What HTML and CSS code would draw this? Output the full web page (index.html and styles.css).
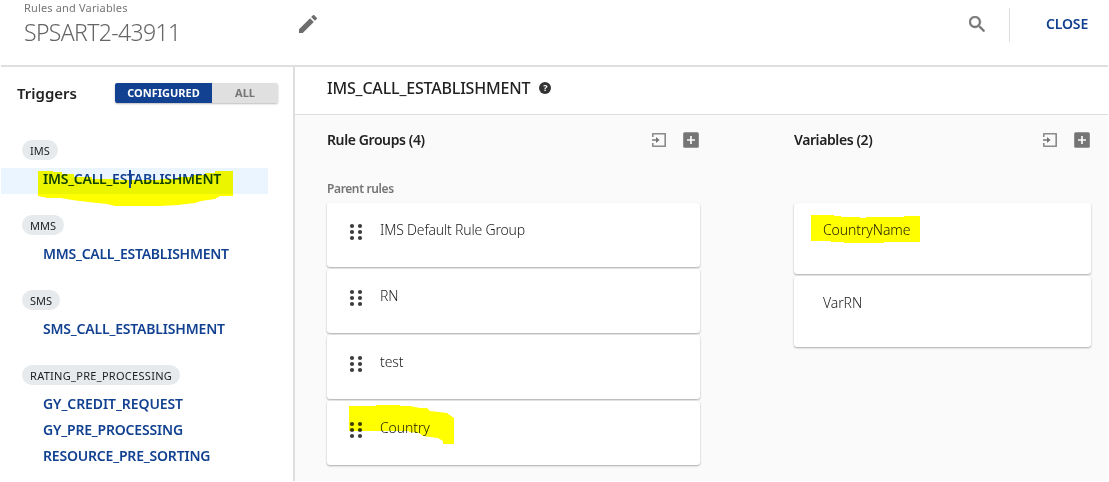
FILE: index.html
```html
<!DOCTYPE html>
<html lang="en">
<head>
<meta charset="utf-8">
<title>Rules and Variables</title>
<link rel="stylesheet" href="styles.css">
</head>
<body>
<svg class="symbols" aria-hidden="true">
  <symbol id="drag" viewBox="0 0 14 18"><g fill="#3d3d3d"><circle cx="3" cy="3" r="2.1"/><circle cx="11" cy="3" r="2.1"/><circle cx="3" cy="9" r="2.1"/><circle cx="11" cy="9" r="2.1"/><circle cx="3" cy="15" r="2.1"/><circle cx="11" cy="15" r="2.1"/></g></symbol>
  <symbol id="import" viewBox="0 0 14 14"><path d="M.8 4V.8h12.4v12.4H.8V10" fill="none" stroke="#8a8a8a" stroke-width="1.6" stroke-linejoin="round"/><path d="M0 7h5" stroke="#757575" stroke-width="1.5"/><path d="M4 3.9 7.6 7 4 10.1z" fill="#757575"/></symbol>
  <symbol id="add" viewBox="0 0 16 16"><rect x="0.2" y="0.2" width="15.6" height="15.6" rx="1.5" fill="#757575"/><path d="M8 4v8M4 8h8" stroke="#fafafa" stroke-width="1.7"/></symbol>
</svg>
<div class="app">
  <header class="topbar">
    <div class="heading">
      <div class="crumb">Rules and Variables</div>
      <div class="title">SPSART2-43911</div>
    </div>
    <svg class="edit" viewBox="3 3 18 18"><path d="M3 17.25V21h3.75L17.81 9.94l-3.75-3.75L3 17.25zM20.71 7.04a1 1 0 0 0 0-1.41l-2.34-2.34a1 1 0 0 0-1.41 0l-1.83 1.83 3.75 3.75 1.83-1.83z" fill="#6e6e6e"/></svg>
    <svg class="search" viewBox="3 3 17.5 17.5"><path d="M15.5 14h-.79l-.28-.27A6.47 6.47 0 0 0 16 9.5 6.5 6.5 0 1 0 9.5 16c1.61 0 3.09-.59 4.23-1.57l.27.28v.79l5 4.99L20.49 19l-4.99-5zm-6 0C7.01 14 5 11.99 5 9.5S7.01 5 9.5 5 14 7.01 14 9.5 11.99 14 9.5 14z" fill="#757575" stroke="#757575" stroke-width=".5"/></svg>
    <div class="divider"></div>
    <div class="close">CLOSE</div>
  </header>
  <div class="body">
    <aside class="sidebar">
      <div class="triggers">
        <div class="triggers-title">Triggers</div>
        <div class="toggle"><span class="on">CONFIGURED</span><span class="off">ALL</span></div>
      </div>
      <section class="group">
        <div class="chip">IMS</div>
        <div class="item selected"><span class="tight">IMS_CALL_ESTABLISHMENT</span>
          <svg class="mark mark-ims" viewBox="0 0 195 35"><path d="M0 0H15V1H24V3H36V6H54V8H77V9H122V8H140V6H155V4H167V2H177V0H195V25H182L177 28L163 30L157 32L140 34L122 35H77L69 33L50 31L34 29L23 27H10L0 25Z" fill="#ff0"/></svg>
          <i class="caret"></i>
        </div>
      </section>
      <section class="group">
        <div class="chip">MMS</div>
        <div class="item"><span class="tight">MMS_CALL_ESTABLISHMENT</span></div>
      </section>
      <section class="group">
        <div class="chip">SMS</div>
        <div class="item"><span>SMS_CALL_ESTABLISHMENT</span></div>
      </section>
      <section class="group">
        <div class="chip chip-wide">RATING_PRE_PROCESSING</div>
        <div class="item"><span class="loose">GY_CREDIT_REQUEST</span></div>
        <div class="item"><span>GY_PRE_PROCESSING</span></div>
        <div class="item"><span>RESOURCE_PRE_SORTING</span></div>
      </section>
    </aside>
    <main class="content">
      <div class="content-head">
        <span class="content-title">IMS_CALL_ESTABLISHMENT</span>
        <span class="help">?</span>
      </div>
      <div class="columns">
        <section class="rules">
          <div class="col-head"><span>Rule Groups (4)</span><svg class="ic-import"><use href="#import"/></svg><svg class="ic-add"><use href="#add"/></svg></div>
          <div class="sub">Parent rules</div>
          <div class="cards">
            <div class="card"><svg class="drag"><use href="#drag"/></svg><span class="name-long">IMS Default Rule Group</span></div>
            <div class="card"><svg class="drag"><use href="#drag"/></svg><span>RN</span></div>
            <div class="card"><svg class="drag"><use href="#drag"/></svg><span>test</span></div>
            <div class="card"><svg class="drag"><use href="#drag"/></svg><span>Country</span>
              <svg class="mark mark-country" viewBox="0 0 105 39"><path d="M0 1H27V0H51V1H61L71 3H78L81 6L98 8L105 13V39H94V36L89 33L74 31L70 28L60 27V26H0Z" fill="#ff0"/></svg>
            </div>
          </div>
        </section>
        <section class="variables">
          <div class="col-head"><span>Variables (2)</span><svg class="ic-import"><use href="#import"/></svg><svg class="ic-add"><use href="#add"/></svg></div>
          <div class="sub"></div>
          <div class="cards">
            <div class="card tall"><span>CountryName</span>
              <svg class="mark mark-name" viewBox="0 0 109 28"><path d="M0 0H23V1H30V2H49V3H55V2H93V1H109V27H73V28H33V27H20V26H0Z" fill="#ff0"/></svg>
            </div>
            <div class="card tall"><span>VarRN</span></div>
          </div>
        </section>
      </div>
    </main>
  </div>
</div>
</body>
</html>
```
FILE: styles.css
```css
* { box-sizing: border-box; }
body { margin: 0; background: #fff; font-family: "Noto Sans", "Open Sans", sans-serif; color: #222; }
.symbols { display: none; }
svg { display: block; flex: none; }
.app { width: 1109px; height: 482px; padding: 0 1px 1px; display: flex; flex-direction: column; overflow: hidden; }

.topbar { height: 67px; flex: none; border-bottom: 2px solid #dedede; display: flex; align-items: flex-start; padding-left: 23px; }
.heading { width: 275px; white-space: nowrap; }
.crumb { font-size: 11px; line-height: 16px; letter-spacing: .16px; color: #757575; }
.title { font-size: 23px; line-height: 33px; font-weight: 300; letter-spacing: -.64px; color: #666; }
.edit { width: 18px; height: 18px; margin-top: 15px; }
.search { width: 16px; height: 16px; margin: 16px 0 0 652px; }
.divider { width: 1px; height: 34px; margin: 8px 0 0 24px; background: #dedede; }
.close { margin: 14px 0 0 36px; font-size: 14px; line-height: 20px; font-weight: 600; letter-spacing: -.15px; color: #124191; }

.body { flex: 1; display: flex; min-height: 0; }
.sidebar { width: 294px; flex: none; border-right: 2px solid #dedede; display: flex; flex-direction: column; overflow: hidden; }
.triggers { display: flex; flex: none; height: 73px; padding: 16px 0 0 16px; }
.triggers-title { width: 98px; font-size: 15px; line-height: 20px; font-weight: 600; }
.toggle { display: flex; width: 163px; height: 20px; border-radius: 2px; overflow: hidden; box-shadow: 0 1px 2px #bbb; font-size: 11px; line-height: 20px; font-weight: 700; text-align: center; }
.on { width: 97px; background: #124191; color: #fff; }
.off { width: 66px; background: #e0e0e0; color: #757575; }
.group { flex: none; margin-bottom: 21px; }
.chip { width: fit-content; height: 20px; margin: 0 0 8px 21px; padding: 0 8px; border-radius: 10px; background: #e6eaed; font-size: 11px; line-height: 21px; }
.chip-wide { letter-spacing: .29px; }
.item { position: relative; width: 267px; height: 26px; padding-left: 42px; font-size: 14px; line-height: 22px; font-weight: 600; letter-spacing: -.19px; color: #124191; white-space: nowrap; }
.tight { letter-spacing: -.25px; }
.loose { letter-spacing: -.08px; }
.selected { background: #ebf5ff; }
.caret { position: absolute; left: 128px; top: 2px; width: 2px; height: 18px; background: #124191; }
.mark { position: absolute; mix-blend-mode: multiply; }
.mark-ims { left: 37px; top: 3px; width: 195px; height: 35px; }

.content { flex: 1; display: flex; flex-direction: column; min-width: 0; }
.content-head { height: 48px; flex: none; border-bottom: 1px solid #dedede; display: flex; align-items: center; gap: 9px; padding: 0 0 5px 32px; }
.content-title { font-size: 16px; line-height: 22px; font-weight: 500; letter-spacing: -.18px; }
.help { width: 12px; height: 12px; border-radius: 50%; background: #333; color: #fff; font-size: 9px; line-height: 12px; font-weight: 700; text-align: center; }
.columns { flex: 1; display: flex; gap: 94px; padding-left: 32px; background: #fafafa; }
.rules { width: 373px; }
.variables { width: 297px; }
.col-head { display: flex; height: 50px; padding-top: 17px; font-size: 14px; line-height: 16px; font-weight: 600; letter-spacing: -.4px; }
.col-head span { margin-right: auto; }
.ic-import { width: 14px; height: 14px; margin: 1px 17px 0 0; }
.ic-add { width: 16px; height: 16px; margin-right: 1px; }
.sub { height: 38px; padding-top: 16px; font-size: 12px; line-height: 16px; font-weight: 600; letter-spacing: -.38px; color: #757575; }
.cards { display: flex; flex-direction: column; gap: 2px; }
.card { position: relative; display: flex; height: 64px; padding: 17px 0 0 22px; background: #fff; border-radius: 3px; box-shadow: 0 1px 2px rgba(0,0,0,.32); font-size: 14px; line-height: 19px; font-weight: 300; letter-spacing: -.1px; white-space: nowrap; }
.name-long { letter-spacing: -.19px; }
.tall { height: 71px; padding-left: 29px; }
.drag { width: 14px; height: 18px; margin: 3px 17px 0 0; }
.mark-country { left: 22px; top: 4px; width: 105px; height: 39px; }
.mark-name { left: 17px; top: 12px; width: 109px; height: 28px; }
```
